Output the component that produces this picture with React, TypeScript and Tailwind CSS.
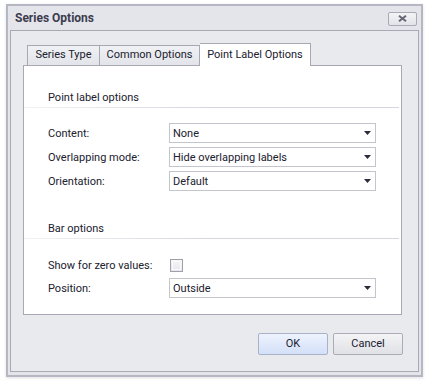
import React from 'react'

const FONT = "font-['Roboto','Liberation_Sans',sans-serif]"

function Arrow() {
  return (
    <svg width="7" height="4" viewBox="0 0 7 4" className="shrink-0">
      <path d="M0 0H7L3.5 4Z" fill="#2b2b3a" />
    </svg>
  )
}

function Combo({ value }: { value: string }) {
  return (
    <div className="w-[207px] h-[20px] border border-[#c3c4cc] bg-white flex items-center pl-[3px] pr-[4px]">
      <span className="flex-1 text-[11px] leading-none text-[#20202e]">{value}</span>
      <Arrow />
    </div>
  )
}

function Row({ label, children, gap }: { label: string; children: React.ReactNode; gap?: string }) {
  return (
    <div className={`flex items-center h-[20px] ${gap ?? ''}`}>
      <div className="w-[121px] text-[11px] leading-none text-[#20202e]">{label}</div>
      {children}
    </div>
  )
}

function GroupHeader({ title }: { title: string }) {
  return (
    <div>
      <div className="pl-[24px] h-[18px] flex items-center text-[11px] text-[#20202e]">{title}</div>
      <div className="h-px mr-[2px] bg-gradient-to-r from-[#f2f2f5] via-[#d6d7de] to-[#d6d7de]" />
    </div>
  )
}

export default function App() {
  return (
    <div className={`w-[429px] h-[382px] bg-white pl-[6px] pt-[4px] ${FONT}`}>
      <div className="w-[417px] h-[373px] border-2 border-[#b6b7c3] bg-[#e4e5ea] px-[2px] pb-[3px] flex flex-col shadow-[0_1px_3px_rgba(0,0,0,0.12)]">
        {/* title bar */}
        <div className="h-[24px] flex items-center justify-between pl-[5px] pr-[2px]">
          <span className="text-[12px] font-bold text-[#3c3c4e] -mt-[1px]">Series Options</span>
          <div className="w-[29px] h-[14px] border border-[#a9aab6] rounded-[2px] bg-gradient-to-b from-[#f4f4f6] to-[#e2e3e8] flex items-center justify-center mt-[1px]">
            <svg width="9" height="7" viewBox="0 0 9 7">
              <path d="M1 0.8L8 6.2M8 0.8L1 6.2" stroke="#666674" strokeWidth="2" />
            </svg>
          </div>
        </div>

        {/* client area */}
        <div className="flex-1 border border-[#a8a9b5] bg-[#e9eaee] pt-[12px] pl-[12px] pr-[15px] flex flex-col">
          {/* tabs */}
          <div className="flex items-end pl-[4px] h-[22px] relative z-10">
            <div className="w-[73px] h-[20px] border border-[#a7a8b3] border-b-0 bg-gradient-to-b from-[#f0f1f4] to-[#e3e4e9] flex items-center justify-center text-[11px] text-[#20202e]">
              Series Type
            </div>
            <div className="w-[100px] h-[20px] border border-l-0 border-[#a7a8b3] border-b-0 bg-gradient-to-b from-[#f0f1f4] to-[#e3e4e9] flex items-center justify-center text-[11px] text-[#20202e]">
              Common Options
            </div>
            <div className="w-[111px] h-[23px] -mb-px border border-l-0 border-[#a7a8b3] border-b-0 bg-white flex items-start pt-[3px] justify-center text-[11px] text-[#20202e]">
              Point Label Options
            </div>
          </div>

          {/* page */}
          <div className="w-[379px] h-[250px] border border-[#a7a8b3] bg-white pt-[23px]">
            <GroupHeader title="Point label options" />
            <div className="pl-[24px] pt-[15px] flex flex-col gap-[4px]">
              <Row label="Content:"><Combo value="None" /></Row>
              <Row label="Overlapping mode:"><Combo value="Hide overlapping labels" /></Row>
              <Row label="Orientation:"><Combo value="Default" /></Row>
            </div>

            <div className="mt-[29px]">
              <GroupHeader title="Bar options" />
            </div>
            <div className="pl-[24px] pt-[16px] flex flex-col gap-[3px]">
              <Row label="Show for zero values:">
                <div className="ml-px w-[13px] h-[13px] border border-[#9fa0ab] bg-gradient-to-b from-[#f6f6f8] to-[#e6e7eb] p-px">
                  <div className="w-full h-full border border-[#f9f9fb]" />
                </div>
              </Row>
              <Row label="Position:"><Combo value="Outside" /></Row>
            </div>
          </div>

          {/* buttons */}
          <div className="flex justify-end gap-[5px] mt-[18px]">
            <button className="w-[70px] h-[22px] border border-[#a9b2c8] rounded-[2px] bg-gradient-to-b from-[#eef3fd] to-[#d3e0f8] text-[11px] text-[#20202e]">
              OK
            </button>
            <button className="w-[70px] h-[22px] border border-[#abacb7] rounded-[2px] bg-gradient-to-b from-[#f4f4f6] to-[#e0e1e6] text-[11px] text-[#20202e]">
              Cancel
            </button>
          </div>
        </div>
      </div>
    </div>
  )
}
